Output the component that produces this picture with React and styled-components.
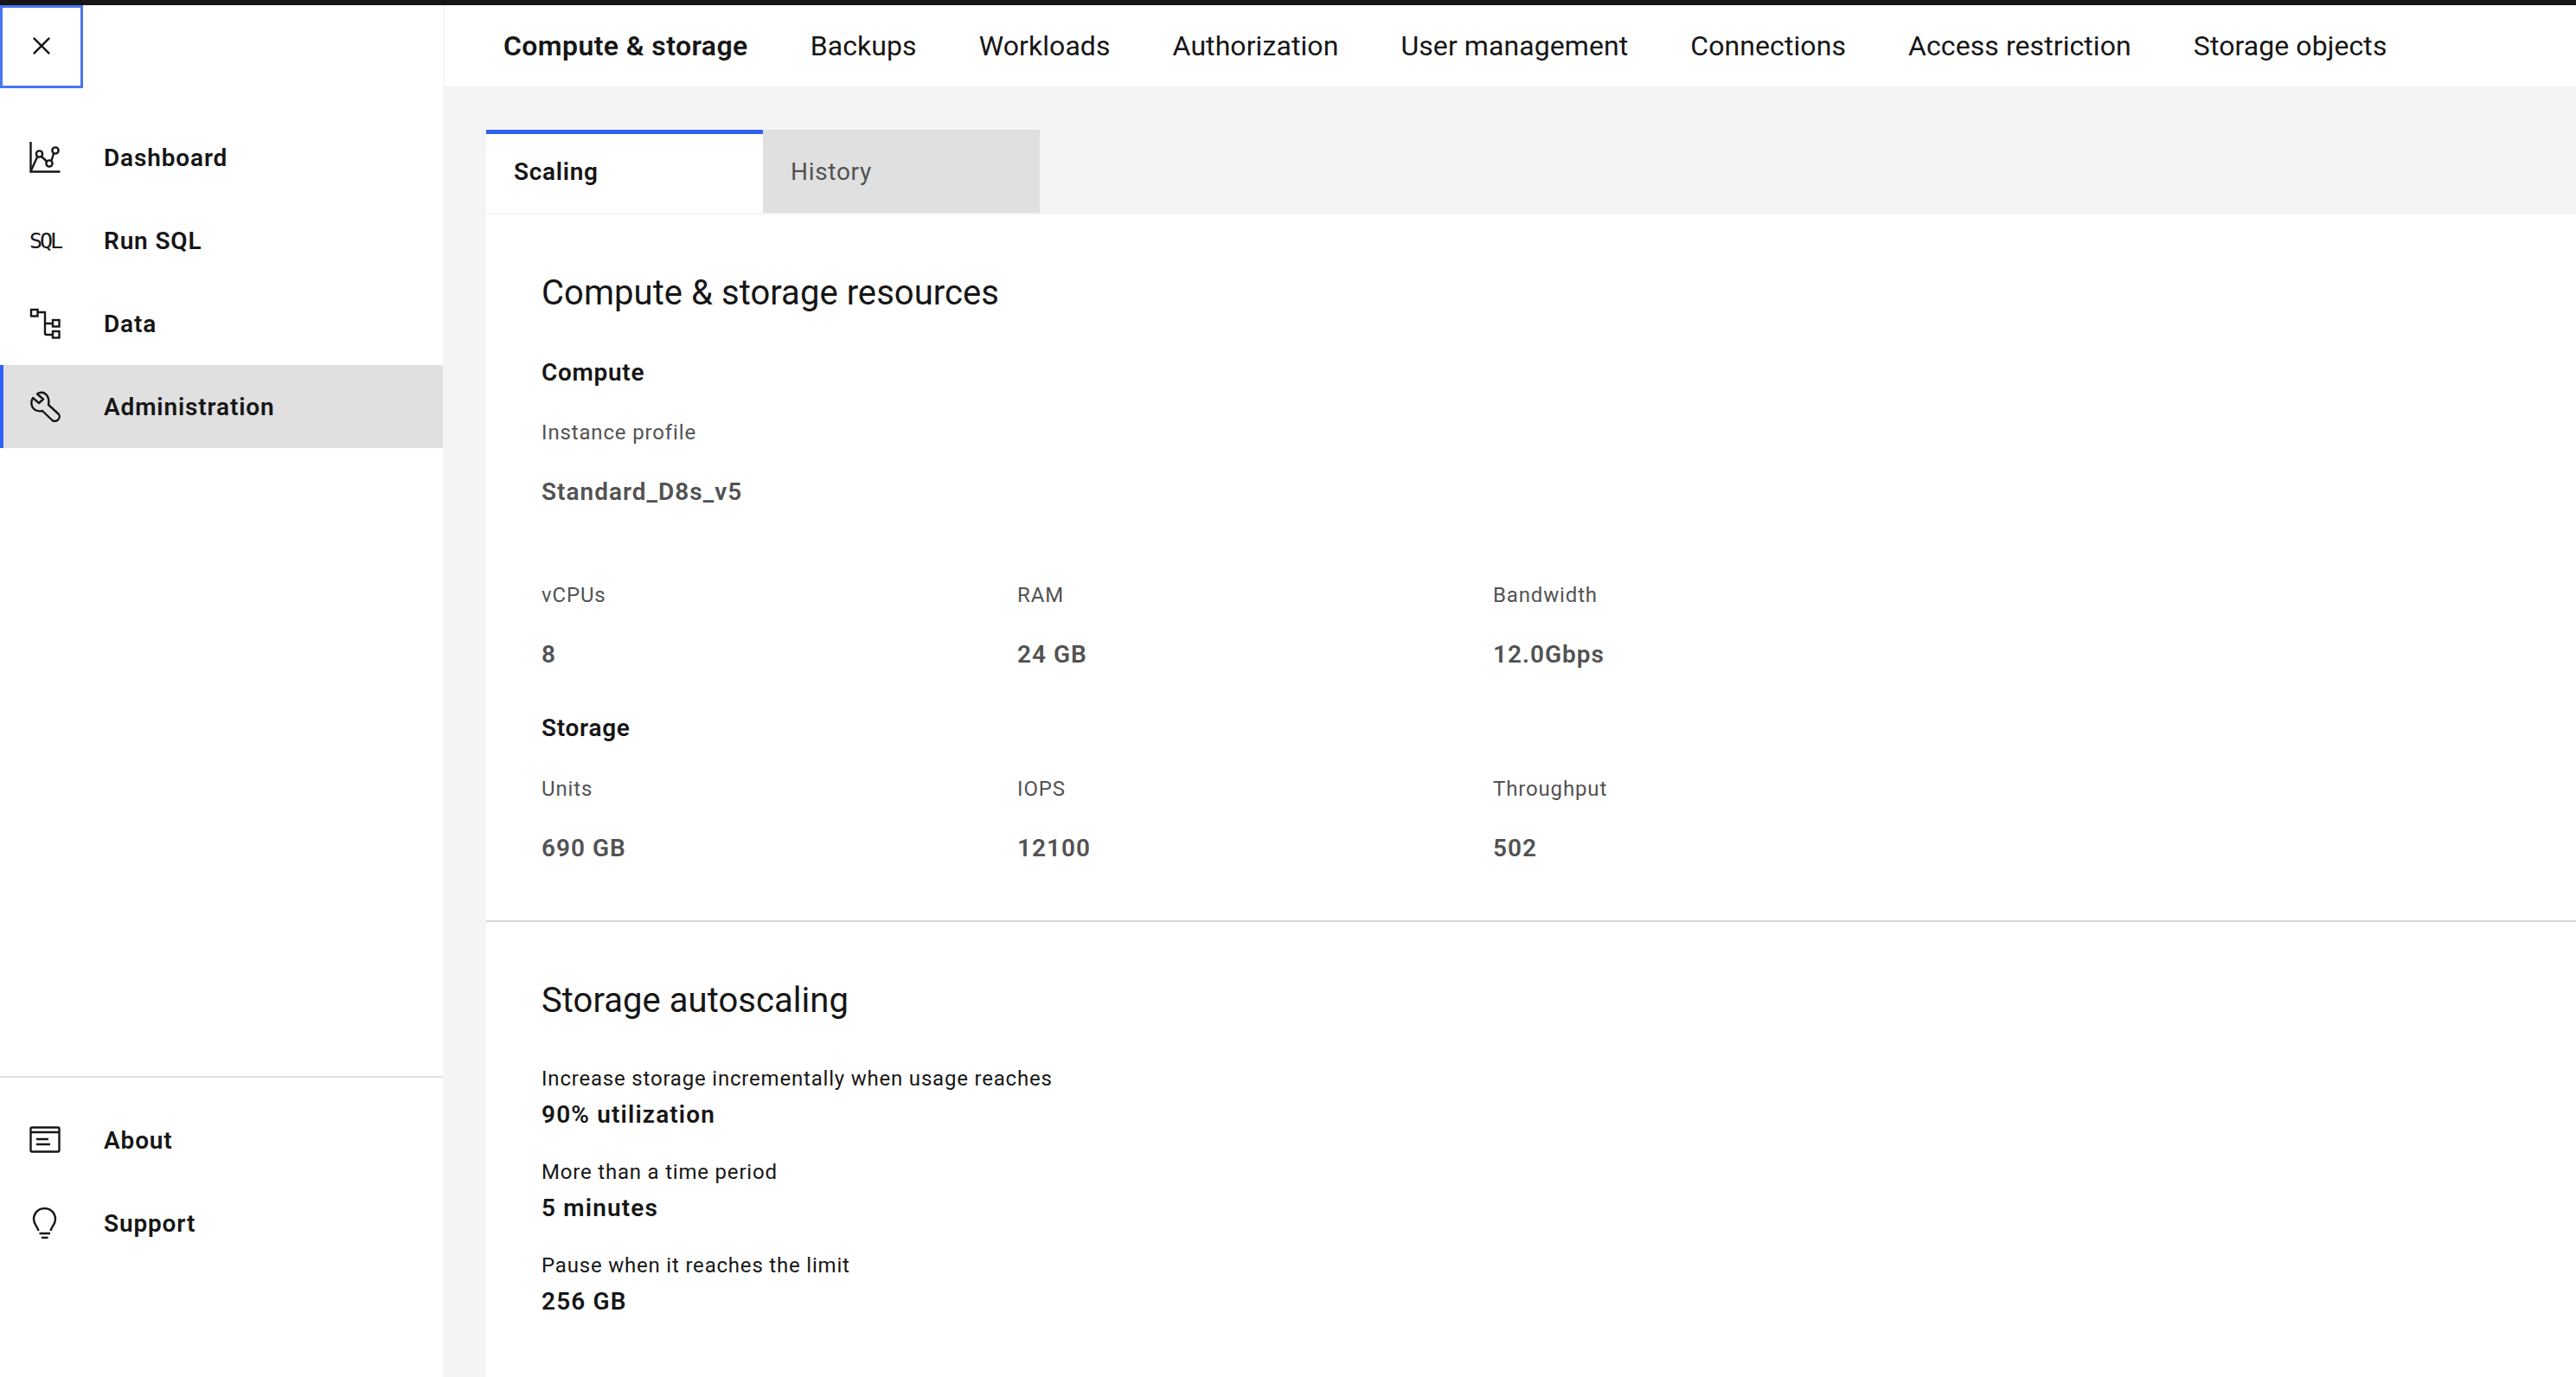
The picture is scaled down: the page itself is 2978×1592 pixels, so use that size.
import React from "react";
import styled, { createGlobalStyle } from "styled-components";

const Global = createGlobalStyle`
  html, body { margin: 0; padding: 0; background: #f4f4f4; }
  body { font-family: Roboto, "Open Sans", sans-serif; color: #161616; overflow: hidden; }
  * { box-sizing: border-box; }
`;

const Page = styled.div`
  width: 2978px;
  height: 1592px;
  display: flex;
  flex-direction: column;
  overflow: hidden;
`;

const TopStrip = styled.div`
  height: 6px;
  flex: none;
  background: #161616;
`;

const Body = styled.div`
  flex: 1;
  display: flex;
  min-height: 0;
`;

const Sidebar = styled.aside`
  width: 512px;
  flex: none;
  background: #fff;
  display: flex;
  flex-direction: column;
`;

const CloseButton = styled.button`
  width: 96px;
  height: 96px;
  flex: none;
  padding: 0 0 2px;
  display: flex;
  align-items: center;
  justify-content: center;
  background: #fff;
  border: 3px solid #4a75f0;
`;

const NavList = styled.nav`
  display: flex;
  flex-direction: column;
  margin-top: 32px;
`;

const NavItem = styled.div`
  height: 96px;
  display: flex;
  align-items: center;
  gap: 50px;
  padding-left: 34px;
  font-size: 28px;
  font-weight: 600;
  letter-spacing: 0.85px;
  color: #161616;
  background: ${(p) => (p.$active ? "#e0e0e0" : "transparent")};
  box-shadow: ${(p) => (p.$active ? "inset 4px 0 0 #2f62f2" : "none")};
`;

const IconBox = styled.svg`
  width: 36px;
  height: 36px;
  flex: none;
  fill: none;
  stroke: #161616;
  stroke-width: 2.4;
`;

const SqlMark = styled.span`
  width: 36px;
  flex: none;
  font-family: "DejaVu Sans Mono", monospace;
  font-size: 25px;
  font-weight: 400;
  letter-spacing: -3px;
  color: #161616;
`;

const SidebarBottom = styled.div`
  margin-top: auto;
  height: 348px;
  flex: none;
  padding-top: 24px;
  border-top: 2px solid #e0e0e0;
`;

const Main = styled.main`
  flex: 1;
  min-width: 0;
  display: flex;
  flex-direction: column;
  border-left: 2px solid #f4f4f4;
`;

const TopTabs = styled.div`
  height: 94px;
  flex: none;
  display: flex;
  align-items: center;
  gap: 72px;
  padding-left: 68px;
  background: #fff;
`;

const TopTab = styled.div`
  font-size: 32px;
  line-height: 44px;
  font-weight: ${(p) => (p.$active ? 600 : 400)};
  letter-spacing: ${(p) => (p.$active ? 0.4 : 0.08)}px;
  color: #161616;
  white-space: nowrap;
`;

const Content = styled.div`
  flex: 1;
  min-height: 0;
  padding: 50px 0 0 48px;
  display: flex;
  flex-direction: column;
`;

const SubTabs = styled.div`
  display: flex;
  flex: none;
`;

const SubTab = styled.div`
  width: 320px;
  height: 96px;
  padding-left: 32px;
  display: flex;
  align-items: center;
  font-size: 28px;
  letter-spacing: 0.7px;
  font-weight: ${(p) => (p.$active ? 600 : 400)};
  color: ${(p) => (p.$active ? "#161616" : "#525252")};
  background: ${(p) => (p.$active ? "#fff" : "#e0e0e0")};
  box-shadow: ${(p) => (p.$active ? "inset 0 5px 0 #2f62f2" : "none")};
`;

const Panel = styled.div`
  flex: 1;
  margin-top: 2px;
  background: #fff;
`;

const Section = styled.section`
  padding: 63px 64px 63px;
  & + & {
    border-top: 2px solid #d4d4d4;
  }
`;

const Heading = styled.h2`
  margin: 0;
  font-size: 40px;
  line-height: 56px;
  font-weight: 400;
  letter-spacing: 0.05px;
  color: #161616;
`;

const SubHeading = styled.h3`
  margin: ${(p) => p.$top}px 0 0;
  font-size: 28px;
  line-height: 40px;
  font-weight: 600;
  letter-spacing: 0.7px;
  color: #161616;
`;

const FieldRow = styled.div`
  display: flex;
  margin-top: ${(p) => p.$top}px;
`;

const Field = styled.div`
  width: 550px;
  flex: none;
`;

const FieldLabel = styled.div`
  font-size: 24px;
  line-height: 32px;
  letter-spacing: 0.85px;
  color: #525252;
`;

const FieldValue = styled.div`
  margin-top: 33px;
  font-size: 28px;
  line-height: 40px;
  font-weight: 600;
  letter-spacing: 1px;
  color: #525252;
`;

const ScaleList = styled.div`
  margin-top: 46px;
  display: flex;
  flex-direction: column;
  gap: 30px;
`;

const ScaleLabel = styled.div`
  font-size: 24px;
  line-height: 32px;
  letter-spacing: 0.8px;
  color: #161616;
`;

const ScaleValue = styled.div`
  margin-top: 6px;
  font-size: 28px;
  line-height: 40px;
  font-weight: 600;
  letter-spacing: 1.15px;
  color: #161616;
`;

const CloseIcon = () => (
  <svg width="40" height="40" viewBox="0 0 32 32" fill="#161616">
    <polygon points="24 9.4 22.6 8 16 14.6 9.4 8 8 9.4 14.6 16 8 22.6 9.4 24 16 17.4 22.6 24 24 22.6 17.4 16 24 9.4" />
  </svg>
);

const DashboardIcon = () => (
  <IconBox viewBox="0 0 36 36">
    <path d="M1.5 0V34.5H35.5" />
    <path d="M2 33L9 17.5M14 17L20 22.5M25.5 21.5L28 13.5" />
    <circle cx="11.5" cy="14" r="3.6" />
    <circle cx="23" cy="25" r="3.6" />
    <circle cx="30" cy="10" r="3.6" />
  </IconBox>
);

const DataIcon = () => (
  <IconBox viewBox="0 0 36 36">
    <rect x="2" y="2" width="7.5" height="7.5" />
    <rect x="27" y="14" width="7.5" height="7.5" />
    <rect x="27" y="27" width="7.5" height="7.5" />
    <path d="M9.5 5H18V29Q18 31 20 31H27M18 18H27" />
  </IconBox>
);

const WrenchIcon = () => (
  <IconBox viewBox="0 0 36 36" strokeLinejoin="round">
    <path d="M9 3.5L16 9.5L11 14L4 8C1 13 2 20 8 22.5C12 24 15 23 15 23L26.5 34C28.5 35.5 31 35 33 33.5C35 31.5 35.5 28.5 33.5 26.5L22 16C23 11 22 6 18 3C15 1 11 1.5 9 3.5Z" />
  </IconBox>
);

const AboutIcon = () => (
  <IconBox viewBox="0 0 36 36">
    <rect x="1.5" y="3.5" width="33" height="28" rx="1.5" />
    <path d="M1.5 9H34.5M8 17H22M8 23H24" />
  </IconBox>
);

const BulbIcon = () => (
  <IconBox viewBox="0 0 36 36">
    <path d="M10.5 27C9.5 22 5 20 5 13.5C5 6.5 10.5 1 17.5 1C24.5 1 30 6.5 30 13.5C30 20 25.5 22 24.5 27" />
    <path d="M11.5 30H24M14 35H21.5" />
  </IconBox>
);

const mainNav = [
  { label: "Dashboard", icon: <DashboardIcon /> },
  { label: "Run SQL", icon: <SqlMark>SQL</SqlMark> },
  { label: "Data", icon: <DataIcon /> },
  { label: "Administration", icon: <WrenchIcon />, active: true },
];

const bottomNav = [
  { label: "About", icon: <AboutIcon /> },
  { label: "Support", icon: <BulbIcon /> },
];

const topTabs = [
  "Compute & storage",
  "Backups",
  "Workloads",
  "Authorization",
  "User management",
  "Connections",
  "Access restriction",
  "Storage objects",
];

const computeFields = [
  { label: "vCPUs", value: "8" },
  { label: "RAM", value: "24 GB" },
  { label: "Bandwidth", value: "12.0Gbps" },
];

const storageFields = [
  { label: "Units", value: "690 GB" },
  { label: "IOPS", value: "12100" },
  { label: "Throughput", value: "502" },
];

const autoscaling = [
  { label: "Increase storage incrementally when usage reaches", value: "90% utilization" },
  { label: "More than a time period", value: "5 minutes" },
  { label: "Pause when it reaches the limit", value: "256 GB" },
];

const Fields = ({ items, top }) => (
  <FieldRow $top={top}>
    {items.map((f) => (
      <Field key={f.label}>
        <FieldLabel>{f.label}</FieldLabel>
        <FieldValue>{f.value}</FieldValue>
      </Field>
    ))}
  </FieldRow>
);

const App = () => {
  return (
    <Page>
      <Global />
      <TopStrip />
      <Body>
        <Sidebar>
          <CloseButton aria-label="Close">
            <CloseIcon />
          </CloseButton>
          <NavList>
            {mainNav.map((item) => (
              <NavItem key={item.label} $active={item.active}>
                {item.icon}
                {item.label}
              </NavItem>
            ))}
          </NavList>
          <SidebarBottom>
            {bottomNav.map((item) => (
              <NavItem key={item.label}>
                {item.icon}
                {item.label}
              </NavItem>
            ))}
          </SidebarBottom>
        </Sidebar>
        <Main>
          <TopTabs>
            {topTabs.map((t, i) => (
              <TopTab key={t} $active={i === 0}>
                {t}
              </TopTab>
            ))}
          </TopTabs>
          <Content>
            <SubTabs>
              <SubTab $active>Scaling</SubTab>
              <SubTab>History</SubTab>
            </SubTabs>
            <Panel>
              <Section>
                <Heading>Compute &amp; storage resources</Heading>
                <SubHeading $top={44}>Compute</SubHeading>
                <Fields top={33} items={[{ label: "Instance profile", value: "Standard_D8s_v5" }]} />
                <Fields top={83} items={computeFields} />
                <SubHeading $top={45}>Storage</SubHeading>
                <Fields top={34} items={storageFields} />
              </Section>
              <Section>
                <Heading>Storage autoscaling</Heading>
                <ScaleList>
                  {autoscaling.map((r) => (
                    <div key={r.label}>
                      <ScaleLabel>{r.label}</ScaleLabel>
                      <ScaleValue>{r.value}</ScaleValue>
                    </div>
                  ))}
                </ScaleList>
              </Section>
            </Panel>
          </Content>
        </Main>
      </Body>
    </Page>
  );
};

export default App;
